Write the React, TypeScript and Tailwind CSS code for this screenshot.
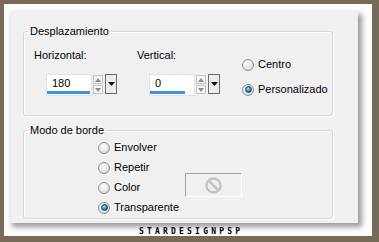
import React from 'react';

// Radio button in the old Windows 7 look
const Radio = ({ label, checked = false }: { label: string; checked?: boolean }) => (
  <div className="flex items-center gap-[4px] h-[13px]">
    <span className="w-[12px] h-[12px] rounded-full border border-[#8f9090] bg-[radial-gradient(circle_at_40%_35%,#ffffff,#e6e6e6_55%,#c9c9c9)] flex items-center justify-center shrink-0">
      {checked && (
        <span className="w-[7px] h-[7px] rounded-full border border-[#17496b] bg-[radial-gradient(circle_at_40%_35%,#a6e2ff,#2787b8_55%,#0f4b70)]" />
      )}
    </span>
    <span className="leading-[13px]">{label}</span>
  </div>
);

// Numeric field with its slider bar, spin arrows and dropdown button
const SpinField = ({ value, bar }: { value: string; bar: number }) => (
  <div className="flex items-start">
    <div className="w-[46px] h-[22px] bg-white border border-[#e2e2e2] flex flex-col justify-between">
      <span className="pl-[5px] pt-[2px] leading-[13px]">{value}</span>
      <div className="h-[3px] bg-[#3d8fe0] mb-[1px]" style={{ width: bar }} />
    </div>
    <div className="flex flex-col gap-[1px] mt-[1px] ml-[1px]">
      <div className="w-[10px] h-[9px] border border-[#c3c3c3] bg-[#f5f5f5] flex items-center justify-center">
        <svg width="6" height="4" viewBox="0 0 6 4"><path d="M0 4 L3 0 L6 4 Z" fill="#8a8a8a" /></svg>
      </div>
      <div className="w-[10px] h-[9px] border border-[#c3c3c3] bg-[#f5f5f5] flex items-center justify-center">
        <svg width="6" height="4" viewBox="0 0 6 4"><path d="M0 0 L6 0 L3 4 Z" fill="#8a8a8a" /></svg>
      </div>
    </div>
    <div className="w-[12px] h-[20px] ml-[2px] border border-[#6c6c6c] bg-[#ebebeb] flex items-center justify-center">
      <svg width="7" height="4" viewBox="0 0 7 4"><path d="M0 0 L7 0 L3.5 4 Z" fill="#111" /></svg>
    </div>
  </div>
);

export default function App() {
  return (
    <div className="w-[379px] h-[242px] bg-[#776a57] pt-[4px] pl-[4px] pr-[7px] pb-[6px] font-['Liberation_Sans',Arial,sans-serif] text-[11px] text-black">
      <div className="w-full h-full bg-[#fcfcfc] flex flex-col">
        {/* Dialog panel */}
        <div className="ml-[6px] mt-[8px] w-[348px] h-[211px] bg-[#f0f0f0] shadow-[3px_3px_5px_1px_rgba(0,0,0,0.38)] pt-[13px] pl-[13px]">
          {/* Desplazamiento */}
          <fieldset className="w-[310px] h-[91px] border border-[#d6d6d6] rounded-[3px] shadow-[inset_1px_1px_0_#ffffff,1px_1px_0_#ffffff]">
            <legend className="ml-[4px] px-[2px] leading-[13px]">Desplazamiento</legend>
            <div className="flex pl-[10px] pt-[11px]">
              <div className="w-[103px]">
                <div className="leading-[13px]">Horizontal:</div>
                <div className="mt-[12px] ml-[12px]">
                  <SpinField value="180" bar={43} />
                </div>
              </div>
              <div className="w-[105px]">
                <div className="leading-[13px]">Vertical:</div>
                <div className="mt-[12px] ml-[12px]">
                  <SpinField value="0" bar={35} />
                </div>
              </div>
              <div className="flex flex-col gap-[12px] mt-[9px]">
                <Radio label="Centro" />
                <Radio label="Personalizado" checked />
              </div>
            </div>
          </fieldset>

          {/* Modo de borde */}
          <fieldset className="mt-[8px] w-[310px] h-[95px] border border-[#d6d6d6] rounded-[3px] shadow-[inset_1px_1px_0_#ffffff,1px_1px_0_#ffffff]">
            <legend className="ml-[4px] px-[2px] leading-[13px]">Modo de borde</legend>
            <div className="flex pl-[74px] pt-[4px]">
              <div className="w-[87px] flex flex-col gap-[7px]">
                <Radio label="Envolver" />
                <Radio label="Repetir" />
                <Radio label="Color" />
                <Radio label="Transparente" checked />
              </div>
              <div className="mt-[32px] w-[57px] h-[24px] border-t border-l border-[#a3a3a3] border-b-white border-r-white border-b border-r flex items-center justify-center">
                <svg width="17" height="17" viewBox="0 0 17 17">
                  <circle cx="8.5" cy="8.5" r="7" fill="none" stroke="#c2c2c2" strokeWidth="2.4" />
                  <line x1="3.6" y1="3.6" x2="13.4" y2="13.4" stroke="#c2c2c2" strokeWidth="2.4" />
                </svg>
              </div>
            </div>
          </fieldset>
        </div>

        {/* Watermark */}
        <div className="mt-[5px] ml-[135px] font-['DejaVu_Sans_Mono',monospace] font-bold text-[8px] leading-[8px] tracking-[3.2px]">
          STARDESIGNPSP
        </div>
      </div>
    </div>
  );
}
